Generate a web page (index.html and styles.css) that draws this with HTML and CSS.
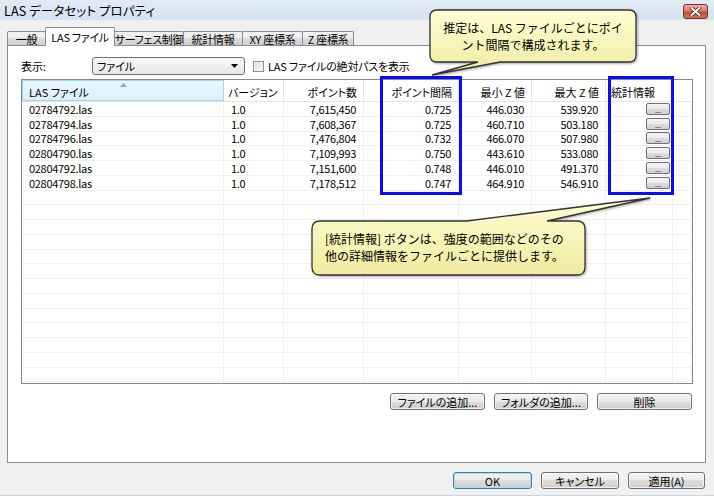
FILE: index.html
```html
<!DOCTYPE html>
<html lang="ja">
<head>
<meta charset="utf-8">
<title>LAS データセット プロパティ</title>
<link rel="stylesheet" href="styles.css">
</head>
<body>
<div class="titlebar">
  <span class="title">LAS データセット プロパティ</span>
  <span class="close">
    <svg width="13" height="9" viewBox="0 0 13 9"><path d="M2.5 1 L10.5 8 M10.5 1 L2.5 8" stroke="#5a1f18" stroke-width="3.6" stroke-linecap="round"/><path d="M2.5 1 L10.5 8 M10.5 1 L2.5 8" stroke="#fff" stroke-width="2" stroke-linecap="round"/></svg>
  </span>
</div>

<div class="dialog">
  <div class="tabs">
    <span class="tab t-general">一般</span>
    <span class="tab active t-las">LAS ファイル</span>
    <span class="tab t-surface">サーフェス制御</span>
    <span class="tab t-stats">統計情報</span>
    <span class="tab t-xy">XY 座標系</span>
    <span class="tab t-z">Z 座標系</span>
  </div>

  <div class="panel">
    <div class="toolbar">
      <span class="lbl">表示:</span>
      <span class="combo"><span>ファイル</span><svg width="7" height="4" viewBox="0 0 7 4"><path d="M0 0 H7 L3.5 4 Z" fill="#000"/></svg></span>
      <span class="chk"></span>
      <span class="chk-lbl">LAS ファイルの絶対パスを表示</span>
    </div>

    <div class="list">
      <div class="lhead">
        <span class="h c1 sorted">LAS ファイル<svg class="sortarrow" width="7" height="4" viewBox="0 0 7 4"><path d="M0 4 L3.5 0 L7 4 Z" fill="#8fa8c0"/></svg></span>
        <span class="h c2">バージョン</span>
        <span class="h c3 r">ポイント数</span>
        <span class="h c4 r">ポイント間隔</span>
        <span class="h c5 r">最小 Z 値</span>
        <span class="h c6 r">最大 Z 値</span>
        <span class="h c7">統計情報</span>
        <span class="h c8"></span>
      </div>
      <div class="lbody">
        <div class="row"><span class="c c1">02784792.las</span><span class="c c2">1.0</span><span class="c c3 r">7,615,450</span><span class="c c4 r">0.725</span><span class="c c5 r">446.030</span><span class="c c6 r">539.920</span><span class="c c7 st"><span class="dots">...</span></span><span class="c c8"></span></div>
        <div class="row"><span class="c c1">02784794.las</span><span class="c c2">1.0</span><span class="c c3 r">7,608,367</span><span class="c c4 r">0.725</span><span class="c c5 r">460.710</span><span class="c c6 r">503.180</span><span class="c c7 st"><span class="dots">...</span></span><span class="c c8"></span></div>
        <div class="row"><span class="c c1">02784796.las</span><span class="c c2">1.0</span><span class="c c3 r">7,476,804</span><span class="c c4 r">0.732</span><span class="c c5 r">466.070</span><span class="c c6 r">507.980</span><span class="c c7 st"><span class="dots">...</span></span><span class="c c8"></span></div>
        <div class="row"><span class="c c1">02804790.las</span><span class="c c2">1.0</span><span class="c c3 r">7,109,993</span><span class="c c4 r">0.750</span><span class="c c5 r">443.610</span><span class="c c6 r">533.080</span><span class="c c7 st"><span class="dots">...</span></span><span class="c c8"></span></div>
        <div class="row"><span class="c c1">02804792.las</span><span class="c c2">1.0</span><span class="c c3 r">7,151,600</span><span class="c c4 r">0.748</span><span class="c c5 r">446.010</span><span class="c c6 r">491.370</span><span class="c c7 st"><span class="dots">...</span></span><span class="c c8"></span></div>
        <div class="row"><span class="c c1">02804798.las</span><span class="c c2">1.0</span><span class="c c3 r">7,178,512</span><span class="c c4 r">0.747</span><span class="c c5 r">464.910</span><span class="c c6 r">546.910</span><span class="c c7 st"><span class="dots">...</span></span><span class="c c8"></span></div>
        <div class="row"><span class="c c1"></span><span class="c c2"></span><span class="c c3"></span><span class="c c4"></span><span class="c c5"></span><span class="c c6"></span><span class="c c7"></span><span class="c c8"></span></div>
        <div class="row"><span class="c c1"></span><span class="c c2"></span><span class="c c3"></span><span class="c c4"></span><span class="c c5"></span><span class="c c6"></span><span class="c c7"></span><span class="c c8"></span></div>
        <div class="row"><span class="c c1"></span><span class="c c2"></span><span class="c c3"></span><span class="c c4"></span><span class="c c5"></span><span class="c c6"></span><span class="c c7"></span><span class="c c8"></span></div>
        <div class="row"><span class="c c1"></span><span class="c c2"></span><span class="c c3"></span><span class="c c4"></span><span class="c c5"></span><span class="c c6"></span><span class="c c7"></span><span class="c c8"></span></div>
        <div class="row"><span class="c c1"></span><span class="c c2"></span><span class="c c3"></span><span class="c c4"></span><span class="c c5"></span><span class="c c6"></span><span class="c c7"></span><span class="c c8"></span></div>
        <div class="row"><span class="c c1"></span><span class="c c2"></span><span class="c c3"></span><span class="c c4"></span><span class="c c5"></span><span class="c c6"></span><span class="c c7"></span><span class="c c8"></span></div>
        <div class="row"><span class="c c1"></span><span class="c c2"></span><span class="c c3"></span><span class="c c4"></span><span class="c c5"></span><span class="c c6"></span><span class="c c7"></span><span class="c c8"></span></div>
        <div class="row"><span class="c c1"></span><span class="c c2"></span><span class="c c3"></span><span class="c c4"></span><span class="c c5"></span><span class="c c6"></span><span class="c c7"></span><span class="c c8"></span></div>
        <div class="row"><span class="c c1"></span><span class="c c2"></span><span class="c c3"></span><span class="c c4"></span><span class="c c5"></span><span class="c c6"></span><span class="c c7"></span><span class="c c8"></span></div>
        <div class="row"><span class="c c1"></span><span class="c c2"></span><span class="c c3"></span><span class="c c4"></span><span class="c c5"></span><span class="c c6"></span><span class="c c7"></span><span class="c c8"></span></div>
        <div class="row"><span class="c c1"></span><span class="c c2"></span><span class="c c3"></span><span class="c c4"></span><span class="c c5"></span><span class="c c6"></span><span class="c c7"></span><span class="c c8"></span></div>
        <div class="row"><span class="c c1"></span><span class="c c2"></span><span class="c c3"></span><span class="c c4"></span><span class="c c5"></span><span class="c c6"></span><span class="c c7"></span><span class="c c8"></span></div>
        <div class="row"><span class="c c1"></span><span class="c c2"></span><span class="c c3"></span><span class="c c4"></span><span class="c c5"></span><span class="c c6"></span><span class="c c7"></span><span class="c c8"></span></div>
      </div>
    </div>

    <div class="actions">
      <button class="btn w95">ファイルの追加...</button>
      <button class="btn w94">フォルダの追加...</button>
      <button class="btn w95">削除</button>
    </div>
  </div>

  <div class="footer">
    <button class="btn w79 default">OK</button>
    <button class="btn w78">キャンセル</button>
    <button class="btn w77">適用(A)</button>
  </div>
</div>

<div class="hl hl-spacing"></div>
<div class="hl hl-stats"></div>

<div class="callout callout-top">
  <svg class="bubble" width="212" height="70" viewBox="0 0 212 70">
    <defs><linearGradient id="g1" x1="0" y1="0" x2="0" y2="1"><stop offset="0" stop-color="#fefed4"/><stop offset="1" stop-color="#efeb9f"/></linearGradient></defs>
    <path d="M9,2 H201 Q208,2 208,9 V47 Q208,54 201,54 H72 L4,67 L50,54 H9 Q2,54 2,47 V9 Q2,2 9,2 Z" fill="url(#g1)" stroke="#333" stroke-width="1.3"/>
  </svg>
  <div class="ctext ctext-top">推定は、LAS ファイルごとにポイ<br>ント間隔で構成されます。</div>
</div>

<div class="callout callout-bottom">
  <svg class="bubble" width="346" height="84" viewBox="0 0 346 84">
    <defs><linearGradient id="g2" x1="0" y1="0" x2="0" y2="1"><stop offset="0" stop-color="#fefed4"/><stop offset="1" stop-color="#efeb9f"/></linearGradient></defs>
    <path d="M10,26 H157 L340,3 L237,26 H267 Q275,26 275,34 V72 Q275,80 267,80 H10 Q2,80 2,72 V34 Q2,26 10,26 Z" fill="url(#g2)" stroke="#333" stroke-width="1.3"/>
  </svg>
  <div class="ctext ctext-bottom">[統計情報] ボタンは、強度の範囲などのその<br>他の詳細情報をファイルごとに提供します。</div>
</div>
</body>
</html>
```

FILE: styles.css
```css
* { box-sizing: border-box; }
html, body { margin: 0; padding: 0; }
body {
  width: 714px;
  height: 496px;
  background: #f0f0f0;
  font-family: "Noto Sans CJK JP", "Liberation Sans", sans-serif;
  font-size: 11px;
  font-feature-settings: "palt";
  color: #000;
  position: relative;
  overflow: hidden;
  border-bottom: 1px solid #c3d4e7;
}

/* title bar */
.titlebar {
  height: 20px;
  display: flex;
  align-items: center;
  justify-content: space-between;
  padding: 0 6px 0 4px;
  background: linear-gradient(#e1ebf6, #d5e2f1);
}
.title { font-size: 12.5px; letter-spacing: 0.1px; }
.close {
  width: 25px;
  height: 15px;
  margin-top: 2px;
  border: 1px solid #7d3128;
  border-radius: 3px;
  display: flex;
  align-items: center;
  justify-content: center;
  background: linear-gradient(#eab1a4 0%, #d77f6d 45%, #c44c36 55%, #d0735c 100%);
}

/* tabs */
.dialog { padding-top: 6px; }
.tabs {
  display: flex;
  align-items: flex-end;
  height: 19px;
  padding-left: 7px;
}
.tab {
  height: 14px;
  margin-right: -1px;
  border: 1px solid #898c95;
  border-bottom: none;
  border-radius: 2px 2px 0 0;
  background: linear-gradient(#f2f2f2 0%, #ebebeb 50%, #dddddd 50%, #cfcfcf 100%);
  display: flex;
  align-items: center;
  justify-content: center;
  white-space: nowrap;
  letter-spacing: -0.3px;
}
.tab.active {
  height: 19px;
  margin-bottom: -1px;
  background: #fff;
  position: relative;
  z-index: 1;
}
.t-general { width: 39px; }
.t-las { width: 70px; }
.t-surface { width: 70px; }
.t-stats { width: 60px; }
.t-xy { width: 61px; }
.t-z { width: 52px; }

/* panel */
.panel {
  margin-left: 7px;
  width: 699px;
  height: 418px;
  border: 1px solid #898c95;
  background: #fff;
  padding: 11px 12px 0 13px;
}
.toolbar {
  display: flex;
  align-items: center;
  height: 18px;
}
.lbl { flex: 0 0 71px; }
.combo {
  flex: 0 0 153px;
  height: 18px;
  border: 1px solid #707070;
  border-radius: 3px;
  background: linear-gradient(#f7f7f7, #e8e8e8);
  display: flex;
  align-items: center;
  justify-content: space-between;
  padding: 0 6px 0 4px;
}
.chk {
  width: 11px;
  height: 11px;
  margin-left: 8px;
  border: 1px solid #8e8f8f;
  background: linear-gradient(135deg, #dcdcdc, #fbfbfb);
  box-shadow: inset 0 0 0 1px #f4f4f4;
}
.chk-lbl { margin-left: 4px; letter-spacing: -0.2px; }

/* list */
.list {
  margin-top: 4px;
  width: 672px;
  height: 305px;
  border: 1px solid #828790;
  overflow: hidden;
}
.lhead {
  display: flex;
  height: 22px;
  border-bottom: 1px solid #e5e5e5;
}
.h {
  display: flex;
  align-items: center;
  border-right: 1px solid #e5e5e5;
  padding: 2px 4px 0 4px;
  white-space: nowrap;
}
.h.r { justify-content: flex-end; padding-right: 6px; }
.h.c1 { padding-left: 6px; }
.h.c7 { padding-left: 5px; }
.h.sorted {
  position: relative;
  background: linear-gradient(#e9f6fd, #dcf0fb);
  border: 1px solid #a1d6f2;
}
.sortarrow {
  position: absolute;
  left: 50%;
  top: 2px;
  margin-left: -3px;
}
.c1 { flex: 0 0 202px; }
.c2 { flex: 0 0 60px; }
.c3 { flex: 0 0 80px; }
.c4 { flex: 0 0 95px; }
.c5 { flex: 0 0 73px; }
.c6 { flex: 0 0 74px; }
.c7 { flex: 0 0 67px; }
.c8 { flex: 1 1 auto; border-right: none; }

.row {
  display: flex;
  height: 14.75px;
  border-bottom: 1px solid #f0f0f0;
}
.c {
  display: flex;
  align-items: center;
  border-right: 1px solid #f0f0f0;
  padding: 0 6px 0 7px;
  white-space: nowrap;
  overflow: hidden;
  letter-spacing: -0.3px;
}
.c.r { justify-content: flex-end; padding-right: 7px; }
.c.st { justify-content: flex-end; padding-right: 2px; }
.dots {
  width: 24px;
  height: 12px;
  border: 1px solid #707070;
  border-radius: 2px;
  background: linear-gradient(#f2f2f2 0%, #ebebeb 50%, #dddddd 50%, #cfcfcf 100%);
  font-size: 7px;
  line-height: 12px;
  text-align: center;
  letter-spacing: 0;
}

/* buttons */
.actions {
  display: flex;
  justify-content: flex-end;
  gap: 9px;
  margin-top: 9px;
  padding-right: 1px;
}
.btn {
  height: 17px;
  padding: 0;
  border: 1px solid #707070;
  border-radius: 3px;
  background: linear-gradient(#f2f2f2 0%, #ebebeb 50%, #dddddd 50%, #cfcfcf 100%);
  font-family: inherit;
  font-size: 11px;
  font-feature-settings: "palt";
  color: #000;
  line-height: 14px;
  box-shadow: inset 0 0 0 1px rgba(255,255,255,0.7);
}
.btn.default {
  border-color: #3c7fb1;
  box-shadow: inset 0 0 0 1px #a6dcf6;
}
.w95 { width: 95px; }
.w94 { width: 94px; }
.w79 { width: 79px; }
.w78 { width: 78px; }
.w77 { width: 77px; }
.footer {
  display: flex;
  justify-content: flex-end;
  gap: 9px;
  padding: 9px 9px 0 0;
}

/* overlays: highlight boxes */
.hl {
  position: absolute;
  border: 3px solid #0a0aff;
}
.hl-spacing { left: 380px; top: 76px; width: 82px; height: 119px; }
.hl-stats { left: 608px; top: 76px; width: 66px; height: 119px; }

/* overlays: callouts */
.callout { position: absolute; }
.callout-top { left: 428px; top: 8px; width: 212px; height: 70px; }
.callout-bottom { left: 310px; top: 195px; width: 346px; height: 84px; }
.bubble {
  display: block;
  filter: drop-shadow(1px 1px 1px rgba(0,0,0,0.35));
}
.ctext {
  position: absolute;
  font-size: 12px;
  font-feature-settings: normal;
  line-height: 17px;
  display: flex;
  align-items: center;
}
.ctext-top {
  left: 2px; top: 2px; width: 206px; height: 52px;
  justify-content: center;
  text-align: center;
}
.ctext-bottom {
  left: 15px; top: 25px; width: 260px; height: 54px;
}
```
